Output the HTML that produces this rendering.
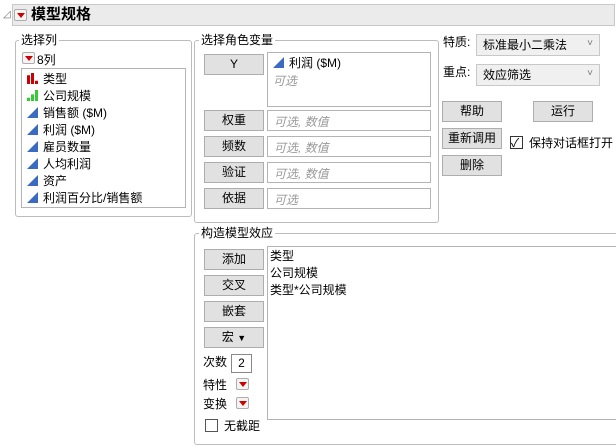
<!DOCTYPE html>
<html><head><meta charset="utf-8"><style>
*{box-sizing:border-box;margin:0;padding:0}
body{width:616px;height:448px;background:#fff;font-family:"Liberation Sans","Noto Sans CJK SC",sans-serif;font-size:12px;color:#000;position:relative;overflow:hidden}
.a{position:absolute}
.grp{position:absolute;border:1px solid #bcbcbc;border-radius:3px}
.lbl{position:absolute;background:#fff;padding:0 2px;line-height:14px;font-size:12px}
.btn{position:absolute;width:60px;height:21px;background:#e1e1e1;border:1px solid #adadad;text-align:center;line-height:19px;font-size:12px}
.box{position:absolute;border:1px solid #b4b4b4;background:#fff}
.ph{color:#999;font-style:italic;position:absolute;left:6px;top:3px}
.rb{position:absolute;width:13px;height:12px;border:1px solid #adadad;background:#f4f4f4;border-radius:2px}
.rb:after{content:"";position:absolute;left:2px;top:3px;border-left:4px solid transparent;border-right:4px solid transparent;border-top:5px solid #c00}
.dd{position:absolute;border:1px solid #c8c8c8;background:#f0f0f0;padding-left:6px;line-height:20px}
.dd:after{content:"˅";position:absolute;right:6px;top:-1px;color:#777;font-size:10px}
.it{position:absolute;left:5px;line-height:16px;white-space:nowrap}
.tri{display:inline-block;width:0;height:0;border-left:11px solid transparent;border-bottom:11px solid #3a6bc0;margin-right:5px;vertical-align:-1px}
.cb{position:absolute;width:13px;height:13px;border:1px solid #333;background:#fff}
</style></head><body>
<div class="a" style="left:3px;top:9px;color:#777;font-size:10px">◿</div>
<div class="a" style="left:12px;top:4px;width:603px;height:22px;background:#ebebeb;border:1px solid #c8c8c8"></div>
<div class="rb" style="left:14px;top:9px"></div>
<div class="a" style="left:31px;top:5px;font-size:15px;font-weight:bold;line-height:20px">模型规格</div>

<div class="grp" style="left:15px;top:40px;width:177px;height:177px"></div>
<div class="lbl" style="left:19px;top:33px">选择列</div>
<div class="rb" style="left:22px;top:52px"></div>
<div class="a" style="left:37px;top:51px">8列</div>
<div class="box" style="left:21px;top:68px;width:165px;height:140px">
 <div class="it" style="top:2px"><span style="display:inline-block;width:11px;height:11px;margin-right:5px;vertical-align:-1px;background:linear-gradient(to right,#c00 0 3px,transparent 3px 4px,#c00 4px 7px,transparent 7px 8px,#c00 8px);clip-path:polygon(0 100%,0 20%,3px 20%,3px 0,7px 0,7px 50%,8px 50%,8px 70%,11px 70%,11px 100%)"></span>类型</div>
 <div class="it" style="top:19px"><span style="display:inline-block;width:11px;height:11px;margin-right:5px;vertical-align:-1px;background:#3c3;clip-path:polygon(0 100%,0 70%,3px 70%,3px 100%,4px 100%,4px 40%,7px 40%,7px 100%,8px 100%,8px 0,11px 0,11px 100%)"></span>公司规模</div>
 <div class="it" style="top:36px"><span class="tri"></span>销售额 ($M)</div>
 <div class="it" style="top:53px"><span class="tri"></span>利润 ($M)</div>
 <div class="it" style="top:70px"><span class="tri"></span>雇员数量</div>
 <div class="it" style="top:87px"><span class="tri"></span>人均利润</div>
 <div class="it" style="top:104px"><span class="tri"></span>资产</div>
 <div class="it" style="top:121px"><span class="tri"></span>利润百分比/销售额</div>
</div>

<div class="grp" style="left:194px;top:40px;width:245px;height:183px"></div>
<div class="lbl" style="left:199px;top:33px">选择角色变量</div>
<div class="btn" style="left:204px;top:54px">Y</div>
<div class="box" style="left:267px;top:52px;width:164px;height:55px">
 <div class="a" style="left:5px;top:2px;line-height:16px"><span class="tri"></span>利润 ($M)</div>
 <div class="ph" style="top:19px;left:5px">可选</div>
</div>
<div class="btn" style="left:204px;top:110px">权重</div><div class="box" style="left:267px;top:110px;width:164px;height:21px"><div class="ph" style="top:2px">可选, 数值</div></div>
<div class="btn" style="left:204px;top:136px">频数</div><div class="box" style="left:267px;top:136px;width:164px;height:21px"><div class="ph" style="top:2px">可选, 数值</div></div>
<div class="btn" style="left:204px;top:162px">验证</div><div class="box" style="left:267px;top:162px;width:164px;height:21px"><div class="ph" style="top:2px">可选, 数值</div></div>
<div class="btn" style="left:204px;top:188px">依据</div><div class="box" style="left:267px;top:188px;width:164px;height:21px"><div class="ph" style="top:2px">可选</div></div>

<div class="a" style="left:443px;top:33px">特质:</div>
<div class="dd" style="left:476px;top:34px;width:124px;height:22px">标准最小二乘法</div>
<div class="a" style="left:443px;top:63px">重点:</div>
<div class="dd" style="left:476px;top:64px;width:124px;height:22px">效应筛选</div>
<div class="btn" style="left:442px;top:101px">帮助</div>
<div class="btn" style="left:533px;top:101px">运行</div>
<div class="btn" style="left:442px;top:128px">重新调用</div>
<div class="btn" style="left:442px;top:155px">删除</div>
<div class="cb" style="left:510px;top:136px"><span style="position:absolute;left:0px;top:-3px;font-size:12px">✓</span></div>
<div class="a" style="left:529px;top:134px">保持对话框打开</div>

<div class="grp" style="left:194px;top:233px;width:430px;height:212px"></div>
<div class="lbl" style="left:199px;top:226px">构造模型效应</div>
<div class="btn" style="left:204px;top:249px">添加</div>
<div class="btn" style="left:204px;top:275px">交叉</div>
<div class="btn" style="left:204px;top:301px">嵌套</div>
<div class="btn" style="left:204px;top:327px">宏 <span style="font-size:9px">▼</span></div>
<div class="box" style="left:267px;top:246px;width:360px;height:174px">
 <div class="it" style="top:1px;left:2px">类型</div>
 <div class="it" style="top:18px;left:2px">公司规模</div>
 <div class="it" style="top:35px;left:2px">类型*公司规模</div>
</div>
<div class="a" style="left:203px;top:353px">次数</div>
<div class="box" style="left:231px;top:354px;width:21px;height:19px;border-color:#888;text-align:center;line-height:16px">2</div>
<div class="a" style="left:203px;top:376px">特性</div><div class="rb" style="left:236px;top:378px"></div>
<div class="a" style="left:203px;top:395px">变换</div><div class="rb" style="left:236px;top:397px"></div>
<div class="cb" style="left:205px;top:419px;border-color:#555"></div>
<div class="a" style="left:224px;top:417px">无截距</div>
</body></html>
